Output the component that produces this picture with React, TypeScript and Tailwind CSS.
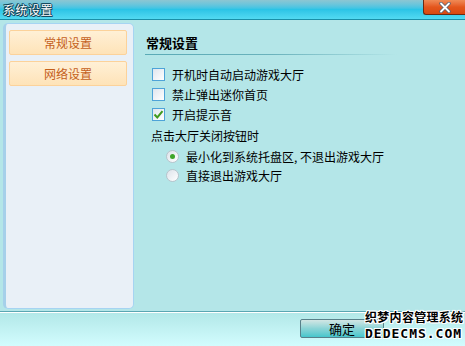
import React from "react";

const font = { fontFamily: '"Noto Sans CJK SC", "Noto Sans", sans-serif' };

function Checkbox({ checked }: { checked?: boolean }) {
  return (
    <div className="w-[13px] h-[13px] border border-[#4ea3d8] bg-gradient-to-br from-[#dfe6ee] to-white flex items-center justify-center">
      {checked && (
        <svg width="11" height="11" viewBox="0 0 11 11">
          <path d="M1.5 5.5 L4.3 8.5 L9.5 2.2" stroke="#3f9a1e" strokeWidth="2" fill="none" />
        </svg>
      )}
    </div>
  );
}

function Radio({ checked }: { checked?: boolean }) {
  return (
    <div className="w-[13px] h-[13px] rounded-full border border-[#b8c4cc] bg-gradient-to-br from-[#dde3ea] to-white flex items-center justify-center">
      {checked && <div className="w-[5px] h-[5px] rounded-full bg-[#3fa52a]" />}
    </div>
  );
}

export default function App() {
  return (
    <div className="w-[465px] h-[346px] flex flex-col bg-[#b4e6e8] overflow-hidden relative text-[12px] text-black" style={font}>
      {/* Title bar */}
      <div className="h-[20px] flex items-start justify-between bg-gradient-to-b from-[#8cc6d2] via-[#2bc4e6] to-[#52daf2] border-b border-[#1a8fa8]">
        <div
          className="pl-[3px] pt-[1px] text-[12px] tracking-[0.5px] leading-[17px] text-white"
          style={{ textShadow: "1px 0 0 #12465a, -1px 0 0 #12465a, 0 1px 0 #12465a, 0 -1px 0 #12465a, 1px 1px 0 #12465a, -1px -1px 0 #12465a" }}
        >
          系统设置
        </div>
        <div className="w-[42px] h-[15px] rounded-bl-[3px] bg-gradient-to-b from-[#ef8a55] via-[#e4561c] to-[#d9480f] border-l border-b border-[#6b2a12] flex items-center justify-center">
          <svg width="12" height="11" viewBox="0 0 12 11">
            <path d="M2 1.5 L10 9.5 M10 1.5 L2 9.5" stroke="#586070" strokeWidth="3.4" strokeLinecap="round" />
            <path d="M2 1.5 L10 9.5 M10 1.5 L2 9.5" stroke="#ffffff" strokeWidth="1.8" strokeLinecap="round" />
          </svg>
        </div>
      </div>

      {/* Body */}
      <div className="flex-1 flex pt-[3px] pb-[2px] pl-[3px]">
        <div className="w-[131px] bg-[#e9f0f7] border border-[#a6d4f2] rounded-[5px] border-l-[3px] border-l-[#a6d0ea] px-[3px] pt-[6px] flex flex-col gap-[6px]">
          <div className="h-[25px] w-[118px] bg-gradient-to-b from-[#fff0d6] to-[#fee3b8] border border-[#fcd29a] rounded-[2px] flex items-center justify-center text-[12px] text-[#c4601c]">
            常规设置
          </div>
          <div className="h-[25px] w-[118px] bg-gradient-to-b from-[#fff0d6] to-[#fee3b8] border border-[#fcd29a] rounded-[2px] flex items-center justify-center text-[12px] text-[#c4601c]">
            网络设置
          </div>
        </div>

        <div className="flex-1 pl-[11px] pt-[11px]">
          <div className="text-[13px] font-bold leading-[18px] pl-[1px]">常规设置</div>
          <div className="mt-[2px] h-[1px] w-[252px] bg-gradient-to-r from-[#5aaab6] via-[#6ab2bc] to-[#b4e6e8]" />
          <div className="mt-[13px] pl-[7px] flex flex-col gap-[7px]">
            <div className="flex items-center gap-[7px] h-[13px]"><Checkbox /><span>开机时自动启动游戏大厅</span></div>
            <div className="flex items-center gap-[7px] h-[13px]"><Checkbox /><span>禁止弹出迷你首页</span></div>
            <div className="flex items-center gap-[7px] h-[13px]"><Checkbox checked /><span>开启提示音</span></div>
          </div>
          <div className="mt-[7px] pl-[6px] leading-[16px]">点击大厅关闭按钮时</div>
          <div className="mt-[6px] pl-[21px] flex flex-col gap-[6px]">
            <div className="flex items-center gap-[7px] h-[13px]"><Radio checked /><span>最小化到系统托盘区, 不退出游戏大厅</span></div>
            <div className="flex items-center gap-[7px] h-[13px]"><Radio /><span>直接退出游戏大厅</span></div>
          </div>
        </div>
      </div>

      {/* Footer */}
      <div className="h-[35px] border-t border-[#5aa6b2] flex flex-col">
        <div className="h-[1px] bg-white" />
        <div className="flex-1 bg-gradient-to-b from-[#b2e8e8] to-[#d2fcfe] flex items-start pl-[300px] pt-[6px]">
          <div className="w-[84px] h-[19px] rounded-[2px] border border-[#58808a] bg-gradient-to-b from-[#d2e6e4] via-[#8ad4d6] to-[#44c6cc] flex items-center justify-center text-[13px]">
            确定
          </div>
        </div>
      </div>

      {/* Watermark */}
      <div
        className="absolute left-[365px] top-[309px] flex flex-col items-start text-black font-bold"
        style={{ textShadow: "1px 0 0 #fff, -1px 0 0 #fff, 0 1px 0 #fff, 0 -1px 0 #fff, 1px 1px 0 #fff, -1px -1px 0 #fff, 1px -1px 0 #fff, -1px 1px 0 #fff" }}
      >
        <span className="text-[12px] leading-[16px] tracking-[0.3px]">织梦内容管理系统</span>
        <span className="text-[13px] leading-[17px] tracking-[1px]" style={{ fontFamily: '"DejaVu Sans Mono", monospace' }}>DEDECMS.COM</span>
      </div>
    </div>
  );
}
